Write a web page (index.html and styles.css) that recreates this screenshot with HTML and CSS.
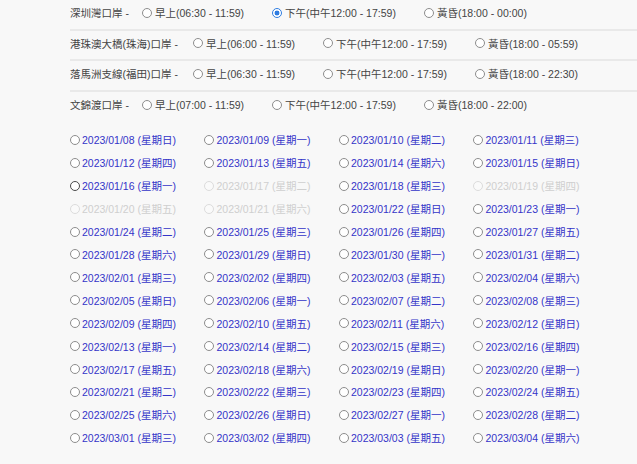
FILE: index.html
```html
<!DOCTYPE html>
<html lang="zh-Hant">
<head>
    <meta charset="UTF-8">
    <title>口岸預約</title>
    <link rel="stylesheet" href="styles.css">
</head>
<body>
<main class="page">
    <!-- 時段 -->
    <div class="sessions">
        <div class="session-row">
            <span class="port port-short">深圳灣口岸 -</span>
            <label class="opt opt-am"><input type="radio" name="p1">早上(06:30 - 11:59)</label>
            <label class="opt opt-pm"><input type="radio" name="p1" checked>下午(中午12:00 - 17:59)</label>
            <label class="opt"><input type="radio" name="p1">黃昏(18:00 - 00:00)</label>
        </div>
        <div class="session-row">
            <span class="port port-long">港珠澳大橋(珠海)口岸 -</span>
            <label class="opt opt-am"><input type="radio" name="p2">早上(06:00 - 11:59)</label>
            <label class="opt opt-pm"><input type="radio" name="p2">下午(中午12:00 - 17:59)</label>
            <label class="opt"><input type="radio" name="p2">黃昏(18:00 - 05:59)</label>
        </div>
        <div class="session-row">
            <span class="port port-long">落馬洲支線(福田)口岸 -</span>
            <label class="opt opt-am"><input type="radio" name="p3">早上(06:30 - 11:59)</label>
            <label class="opt opt-pm"><input type="radio" name="p3">下午(中午12:00 - 17:59)</label>
            <label class="opt"><input type="radio" name="p3">黃昏(18:00 - 22:30)</label>
        </div>
        <div class="session-row last">
            <span class="port port-short">文錦渡口岸 -</span>
            <label class="opt opt-am"><input type="radio" name="p4">早上(07:00 - 11:59)</label>
            <label class="opt opt-pm"><input type="radio" name="p4">下午(中午12:00 - 17:59)</label>
            <label class="opt"><input type="radio" name="p4">黃昏(18:00 - 22:00)</label>
        </div>
    </div>

    <!-- 日期 -->
    <div class="dates">
        <label class="day"><input type="radio" name="d">2023/01/08 (星期日)</label>
        <label class="day"><input type="radio" name="d">2023/01/09 (星期一)</label>
        <label class="day"><input type="radio" name="d">2023/01/10 (星期二)</label>
        <label class="day"><input type="radio" name="d">2023/01/11 (星期三)</label>
        <label class="day"><input type="radio" name="d">2023/01/12 (星期四)</label>
        <label class="day"><input type="radio" name="d">2023/01/13 (星期五)</label>
        <label class="day"><input type="radio" name="d">2023/01/14 (星期六)</label>
        <label class="day"><input type="radio" name="d">2023/01/15 (星期日)</label>
        <label class="day"><input type="radio" name="d" class="hover">2023/01/16 (星期一)</label>
        <label class="day off"><input type="radio" name="d" disabled>2023/01/17 (星期二)</label>
        <label class="day"><input type="radio" name="d">2023/01/18 (星期三)</label>
        <label class="day off"><input type="radio" name="d" disabled>2023/01/19 (星期四)</label>
        <label class="day off"><input type="radio" name="d" disabled>2023/01/20 (星期五)</label>
        <label class="day off"><input type="radio" name="d" disabled>2023/01/21 (星期六)</label>
        <label class="day"><input type="radio" name="d">2023/01/22 (星期日)</label>
        <label class="day"><input type="radio" name="d">2023/01/23 (星期一)</label>
        <label class="day"><input type="radio" name="d">2023/01/24 (星期二)</label>
        <label class="day"><input type="radio" name="d">2023/01/25 (星期三)</label>
        <label class="day"><input type="radio" name="d">2023/01/26 (星期四)</label>
        <label class="day"><input type="radio" name="d">2023/01/27 (星期五)</label>
        <label class="day"><input type="radio" name="d">2023/01/28 (星期六)</label>
        <label class="day"><input type="radio" name="d">2023/01/29 (星期日)</label>
        <label class="day"><input type="radio" name="d">2023/01/30 (星期一)</label>
        <label class="day"><input type="radio" name="d">2023/01/31 (星期二)</label>
        <label class="day"><input type="radio" name="d">2023/02/01 (星期三)</label>
        <label class="day"><input type="radio" name="d">2023/02/02 (星期四)</label>
        <label class="day"><input type="radio" name="d">2023/02/03 (星期五)</label>
        <label class="day"><input type="radio" name="d">2023/02/04 (星期六)</label>
        <label class="day"><input type="radio" name="d">2023/02/05 (星期日)</label>
        <label class="day"><input type="radio" name="d">2023/02/06 (星期一)</label>
        <label class="day"><input type="radio" name="d">2023/02/07 (星期二)</label>
        <label class="day"><input type="radio" name="d">2023/02/08 (星期三)</label>
        <label class="day"><input type="radio" name="d">2023/02/09 (星期四)</label>
        <label class="day"><input type="radio" name="d">2023/02/10 (星期五)</label>
        <label class="day"><input type="radio" name="d">2023/02/11 (星期六)</label>
        <label class="day"><input type="radio" name="d">2023/02/12 (星期日)</label>
        <label class="day"><input type="radio" name="d">2023/02/13 (星期一)</label>
        <label class="day"><input type="radio" name="d">2023/02/14 (星期二)</label>
        <label class="day"><input type="radio" name="d">2023/02/15 (星期三)</label>
        <label class="day"><input type="radio" name="d">2023/02/16 (星期四)</label>
        <label class="day"><input type="radio" name="d">2023/02/17 (星期五)</label>
        <label class="day"><input type="radio" name="d">2023/02/18 (星期六)</label>
        <label class="day"><input type="radio" name="d">2023/02/19 (星期日)</label>
        <label class="day"><input type="radio" name="d">2023/02/20 (星期一)</label>
        <label class="day"><input type="radio" name="d">2023/02/21 (星期二)</label>
        <label class="day"><input type="radio" name="d">2023/02/22 (星期三)</label>
        <label class="day"><input type="radio" name="d">2023/02/23 (星期四)</label>
        <label class="day"><input type="radio" name="d">2023/02/24 (星期五)</label>
        <label class="day"><input type="radio" name="d">2023/02/25 (星期六)</label>
        <label class="day"><input type="radio" name="d">2023/02/26 (星期日)</label>
        <label class="day"><input type="radio" name="d">2023/02/27 (星期一)</label>
        <label class="day"><input type="radio" name="d">2023/02/28 (星期二)</label>
        <label class="day"><input type="radio" name="d">2023/03/01 (星期三)</label>
        <label class="day"><input type="radio" name="d">2023/03/02 (星期四)</label>
        <label class="day"><input type="radio" name="d">2023/03/03 (星期五)</label>
        <label class="day"><input type="radio" name="d">2023/03/04 (星期六)</label>
    </div>
</main>
</body>
</html>
```

FILE: styles.css
```css
html, body {
    margin: 0;
    height: 100%;
    overflow: hidden;
}

body {
    background: #f8f8f8;
    font-family: "Liberation Sans", "Noto Sans CJK TC", sans-serif;
    font-size: 10.5px;
    color: #444;
}

.page {
    padding-left: 70px;
}

/* 時段 */
.session-row {
    display: flex;
    align-items: center;
    box-sizing: border-box;
    height: 30.5px;
    padding-bottom: 3px;
    border-bottom: 2px solid #e9e9e9;
    white-space: nowrap;
}

.session-row.last {
    border-bottom: none;
    height: 29px;
}

.port {
    flex: none;
}

.port-short {
    width: 72px;
}

.port-long {
    width: 123px;
}

.opt {
    display: flex;
    align-items: center;
}

.opt-am {
    width: 130px;
}

.opt-pm {
    width: 152px;
}

/* 日期 */
.dates {
    display: grid;
    grid-template-columns: repeat(4, 134.5px);
    grid-auto-rows: 22.92px;
    margin-top: 8px;
    margin-left: -0.5px;
}

.day {
    display: flex;
    align-items: center;
    color: #3434c8;
    white-space: nowrap;
}

.day.off {
    color: #cfcfcf;
}

/* radio */
input[type="radio"] {
    appearance: none;
    -webkit-appearance: none;
    box-sizing: border-box;
    width: 10px;
    height: 10px;
    margin: 0 2.5px 0 0;
    border: 1px solid #8d8d8d;
    border-radius: 50%;
    background: #fff;
    flex: none;
}

.opt input[type="radio"] {
    margin-right: 3px;
}

input[type="radio"]:checked {
    border-color: #2f7de1;
    background: radial-gradient(circle, #2f7de1 0 2.2px, #fff 2.7px);
}

input[type="radio"].hover {
    border-color: #4a4a4a;
}

input[type="radio"]:disabled {
    border-color: #dcdcdc;
    background: #fafafa;
}
```
